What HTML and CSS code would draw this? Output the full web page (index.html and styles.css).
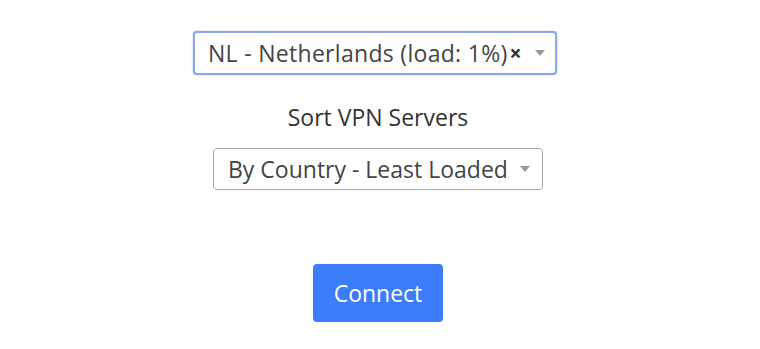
FILE: index.html
```html
<!DOCTYPE html>
<html>
<head>
<meta charset="utf-8">
<link rel="stylesheet" href="styles.css">
</head>
<body>
<div class="page">
  <div class="select select-focused">
    <span class="select-text">NL - Netherlands (load: 1%)</span>
    <span class="clear">×</span>
    <span class="arrow"></span>
  </div>
  <div class="label">Sort VPN Servers</div>
  <div class="select select-sort">
    <span class="select-text">By Country - Least Loaded</span>
    <span class="arrow"></span>
  </div>
  <button class="btn">Connect</button>
</div>
</body>
</html>
```
FILE: styles.css
```css
html, body {
  margin: 0;
  background: #fff;
}
body {
  font-family: "Open Sans", "Noto Sans", sans-serif;
  color: #333;
}
.page {
  display: flex;
  flex-direction: column;
  align-items: center;
  padding-top: 31px;
  padding-right: 4px;
}
.select {
  box-sizing: border-box;
  display: flex;
  align-items: center;
  border: 1px solid #aaa;
  border-radius: 4px;
  background: #fff;
  font-size: 23px;
  color: #444;
}
.select-focused {
  width: 364px;
  height: 44px;
  margin-right: 6px;
  padding-left: 13px;
  padding-right: 10px;
  border: 2px solid #8ba6ec;
  box-shadow: 0 0 2px rgba(80,120,230,0.5);
}
.select-focused .select-text {
  letter-spacing: 0.3px;
}
.select-sort {
  width: 330px;
  height: 42px;
  padding-left: 14px;
  padding-right: 12px;
  margin-top: 15px;
}
.select-text {
  white-space: nowrap;
}
.clear {
  font-weight: 700;
  font-size: 21px;
  margin-left: 2px;
  color: #333;
}
.arrow {
  margin-left: auto;
  width: 0;
  height: 0;
  border-left: 5px solid transparent;
  border-right: 5px solid transparent;
  border-top: 6px solid #999;
}
.label {
  margin-top: 27px;
  font-size: 23px;
  line-height: 31px;
  color: #333;
}
.btn {
  margin-top: 74px;
  width: 130px;
  height: 58px;
  border: none;
  border-radius: 4px;
  background: #3b7dfb;
  color: #fff;
  font-family: "Open Sans", "Noto Sans", sans-serif;
  font-size: 23px;
}
```
